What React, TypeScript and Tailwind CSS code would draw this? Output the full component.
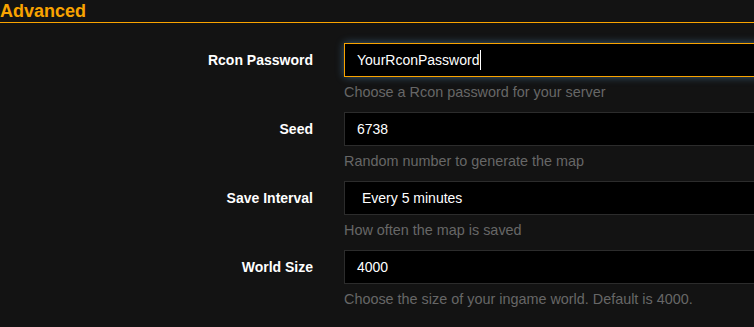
import React from "react";

type Field = {
  label: string;
  value: string;
  help: string;
  focused?: boolean;
  select?: boolean;
};

const FIELDS: Field[] = [
  {
    label: "Rcon Password",
    value: "YourRconPassword",
    help: "Choose a Rcon password for your server",
    focused: true,
  },
  { label: "Seed", value: "6738", help: "Random number to generate the map" },
  {
    label: "Save Interval",
    value: "Every 5 minutes",
    help: "How often the map is saved",
    select: true,
  },
  {
    label: "World Size",
    value: "4000",
    help: "Choose the size of your ingame world. Default is 4000.",
  },
];

export default function App() {
  return (
    <div
      className="h-[327px] w-[754px] overflow-hidden bg-[#131313]"
      style={{ fontFamily: '"Liberation Sans", Arial, sans-serif' }}
    >
      {/* section header */}
      <div className="h-[23px] border-b border-[#f9a300]">
        <h2 className="pt-px text-[18px] font-bold leading-[20px] text-[#f9a300]">Advanced</h2>
      </div>

      <div className="pt-[20px]">
        {FIELDS.map((f) => (
          <FormRow key={f.label} field={f} />
        ))}
      </div>
    </div>
  );
}

function FormRow({ field }: { field: Field }) {
  return (
    <div className="flex">
      <div className="flex h-[34px] w-[313px] shrink-0 items-center justify-end">
        <label className="text-[14px] font-bold text-white">{field.label}</label>
      </div>
      <div className="ml-[31px] w-[460px] shrink-0">
        <div
          className={
            field.focused
              ? "flex h-[34px] items-center border border-[#f9a300] bg-black pl-[12px] shadow-[0_0_8px_rgba(102,175,233,0.45)]"
              : "flex h-[34px] items-center border border-[#2c2c2c] bg-black pl-[12px]"
          }
        >
          <span
            className={
              field.select
                ? "pl-[5px] text-[14px] text-white"
                : "text-[14px] text-white"
            }
          >
            {field.value}
          </span>
          {field.focused && <span className="ml-px h-[20px] w-px bg-white" />}
        </div>
        <p className="mt-[5px] mb-[10px] text-[14.4px] leading-[20px] text-[#676767]">
          {field.help}
        </p>
      </div>
    </div>
  );
}
